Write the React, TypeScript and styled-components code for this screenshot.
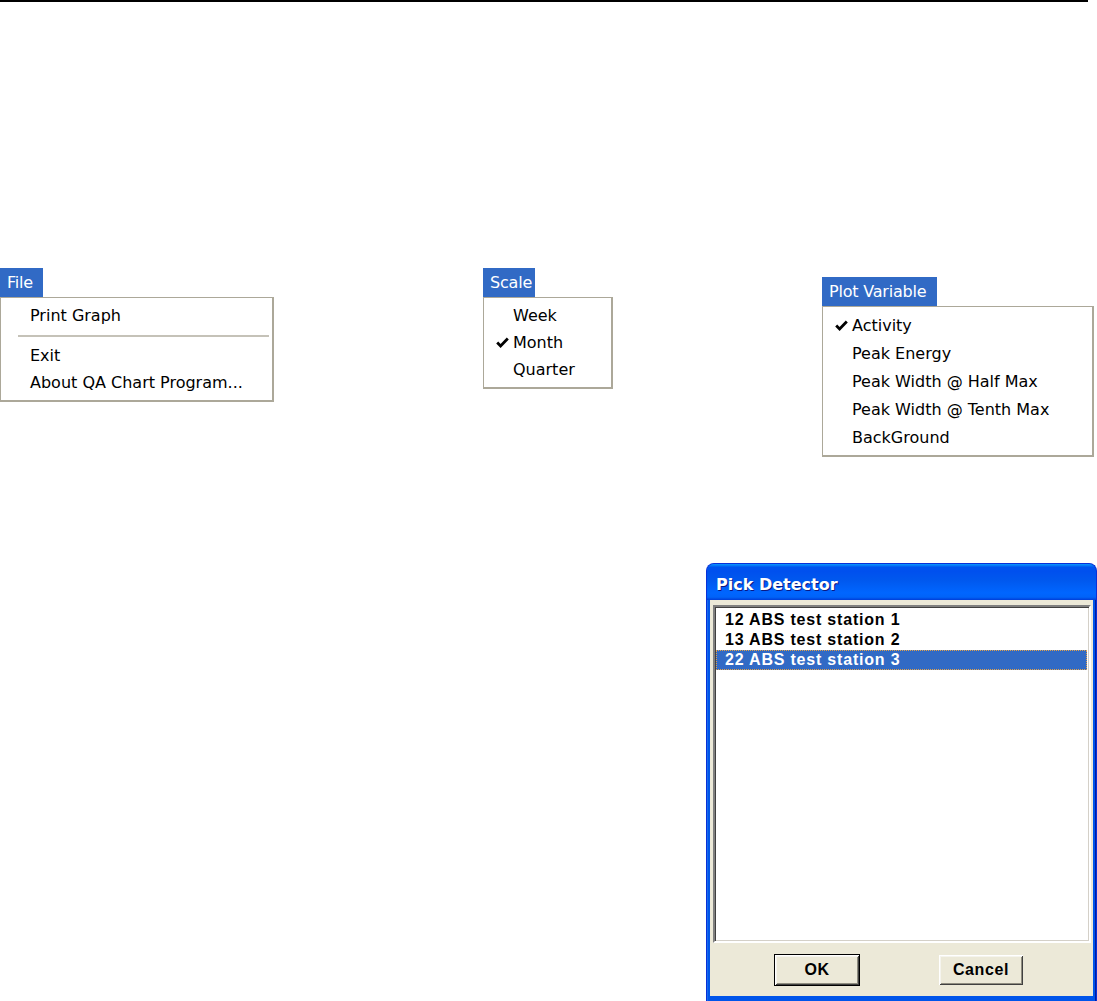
import React from "react";
import styled, { createGlobalStyle } from "styled-components";

const GlobalStyle = createGlobalStyle`
  html, body { margin: 0; padding: 0; background: #ffffff; }
  body { width: 1097px; height: 1001px; overflow: hidden; }
`;

const Page = styled.div`
  width: 1097px;
  height: 1001px;
  display: flex;
  flex-direction: column;
  font-family: "DejaVu Sans", "Liberation Sans", sans-serif;
`;

const TopRule = styled.div`
  width: 1088px;
  height: 2px;
  background: #000;
`;

const MenuRow = styled.div`
  display: grid;
  grid-template-columns: 483px 339px 1fr;
  margin-top: 266px;
  height: 200px;
`;

const MenuGroup = styled.div<{ $top?: number }>`
  display: flex;
  flex-direction: column;
  align-items: flex-start;
  margin-top: ${(p) => p.$top ?? 0}px;
`;

const MenuTitle = styled.div<{ $w: number }>`
  box-sizing: border-box;
  min-width: ${(p) => p.$w}px;
  height: 29px;
  padding: 0 3px 0 7px;
  background: #316ac5;
  color: #fff;
  font-size: 16px;
  letter-spacing: -0.2px;
  line-height: 29px;
  white-space: nowrap;
`;

const MenuPanel = styled.div<{ $w: number; $rowH: number }>`
  box-sizing: border-box;
  width: ${(p) => p.$w}px;
  background: #fff;
  border-style: solid;
  border-color: #aca899;
  border-width: 1px 2px 2px 1px;
  padding: 4px 0 4px;
  display: flex;
  flex-direction: column;
  --row-h: ${(p) => p.$rowH}px;
`;

const MenuItem = styled.div`
  display: grid;
  grid-template-columns: 29px 1fr;
  align-items: center;
  height: var(--row-h);
  font-size: 16px;
  color: #000;
  white-space: nowrap;
`;

const CheckCell = styled.span`
  display: flex;
  justify-content: flex-end;
  padding-right: 4px;
`;

const Separator = styled.div`
  height: 13px;
  display: flex;
  align-items: center;
  padding: 0 3px 0 17px;
  &::after {
    content: "";
    flex: 1;
    height: 2px;
    background: #c5c2b8;
  }
`;

const Check = () => (
  <svg width="13" height="11" viewBox="0 0 13 11">
    <path d="M1.2 5.5 L4.6 9 L11.8 1.6" fill="none" stroke="#000" strokeWidth="2.8" />
  </svg>
);

type Item = { label: string; checked?: boolean; sep?: boolean };

const Menu = ({
  title,
  titleW,
  w,
  rowH,
  items,
  top,
}: {
  title: string;
  titleW: number;
  w: number;
  rowH: number;
  items: Item[];
  top?: number;
}) => (
  <MenuGroup $top={top}>
    <MenuTitle $w={titleW}>{title}</MenuTitle>
    <MenuPanel $w={w} $rowH={rowH}>
      {items.map((it, i) =>
        it.sep ? (
          <Separator key={i} />
        ) : (
          <MenuItem key={i}>
            <CheckCell>{it.checked ? <Check /> : null}</CheckCell>
            <span>{it.label}</span>
          </MenuItem>
        )
      )}
    </MenuPanel>
  </MenuGroup>
);

const Dialog = styled.div`
  align-self: flex-end;
  margin-top: 95px;
  box-sizing: border-box;
  width: 391px;
  height: 438px;
  display: flex;
  flex-direction: column;
  background: #0055ea;
  border: 1px solid #0831d9;
  border-bottom: none;
  border-radius: 8px 8px 0 0;
  padding: 0 3px 5px 3px;
  box-shadow: inset 1px 0 #166aee, inset -1px 0 #001ea0;
`;

const TitleBar = styled.div`
  height: 36px;
  margin: 0 -3px;
  padding: 4px 0 0 9px;
  box-sizing: border-box;
  display: flex;
  align-items: center;
  border-radius: 7px 7px 0 0;
  background: linear-gradient(
    to bottom,
    #0997ff 0%,
    #0053ee 9%,
    #0050ee 20%,
    #0058ee 45%,
    #0066ff 80%,
    #0063f8 92%,
    #003dd7 100%
  );
  color: #fff;
  font-family: "DejaVu Sans", sans-serif;
  font-weight: bold;
  font-size: 16px;
  text-shadow: 1px 1px 0 #0a1883;
`;

const Body = styled.div`
  flex: 1;
  display: flex;
  flex-direction: column;
  background: #ece9d8;
  padding: 5px 2px 10px 3px;
`;

const ListBox = styled.div`
  box-sizing: border-box;
  height: 338px;
  background: #fff;
  border-style: solid;
  border-width: 2px;
  border-color: #808080 #fff #fff #808080;
  box-shadow: inset 1px 1px #404040, inset -1px -1px #d4d0c8;
  padding: 3px 2px 0 1px;
  display: flex;
  flex-direction: column;
`;

const ListItem = styled.div<{ $selected?: boolean }>`
  box-sizing: border-box;
  height: 20px;
  line-height: 20px;
  padding-left: 9px;
  font-family: "Liberation Sans", Arial, sans-serif;
  font-weight: bold;
  font-size: 16px;
  letter-spacing: 0.8px;
  color: ${(p) => (p.$selected ? "#fff" : "#000")};
  background: ${(p) => (p.$selected ? "#316ac5" : "transparent")};
  outline: ${(p) => (p.$selected ? "1px dotted #e3a24a" : "none")};
  outline-offset: -1px;
`;

const ButtonRow = styled.div`
  display: flex;
  gap: 78px;
  padding-left: 61px;
  margin-top: 11px;
`;

const Button = styled.button<{ $default?: boolean }>`
  box-sizing: border-box;
  width: 86px;
  height: 32px;
  padding: 0;
  background: #ece9d8;
  font-family: "Liberation Sans", Arial, sans-serif;
  font-weight: bold;
  font-size: 16px;
  letter-spacing: 0.6px;
  color: #000;
  border: 1px solid ${(p) => (p.$default ? "#000" : "#ece9d8")};
  box-shadow: inset 1px 1px #fff, inset -1px -1px #404040,
    inset 2px 2px #f5f4ee, inset -2px -2px #8f8d80;
`;

export default function App() {
  return (
    <>
      <GlobalStyle />
      <Page>
        <TopRule />
        <MenuRow>
          <Menu
            title="File"
            titleW={43}
            w={274}
            rowH={27}
            items={[
              { label: "Print Graph" },
              { label: "", sep: true },
              { label: "Exit" },
              { label: "About QA Chart Program..." },
            ]}
          />
          <Menu
            title="Scale"
            titleW={47}
            w={130}
            rowH={27}
            items={[
              { label: "Week" },
              { label: "Month", checked: true },
              { label: "Quarter" },
            ]}
          />
          <Menu
            title="Plot Variable"
            titleW={115}
            w={272}
            rowH={28}
            top={9}
            items={[
              { label: "Activity", checked: true },
              { label: "Peak Energy" },
              { label: "Peak Width @ Half Max" },
              { label: "Peak Width @ Tenth Max" },
              { label: "BackGround" },
            ]}
          />
        </MenuRow>
        <Dialog>
          <TitleBar>Pick Detector</TitleBar>
          <Body>
            <ListBox>
              <ListItem>12 ABS test station 1</ListItem>
              <ListItem>13 ABS test station 2</ListItem>
              <ListItem $selected>22 ABS test station 3</ListItem>
            </ListBox>
            <ButtonRow>
              <Button $default>OK</Button>
              <Button>Cancel</Button>
            </ButtonRow>
          </Body>
        </Dialog>
      </Page>
    </>
  );
}
